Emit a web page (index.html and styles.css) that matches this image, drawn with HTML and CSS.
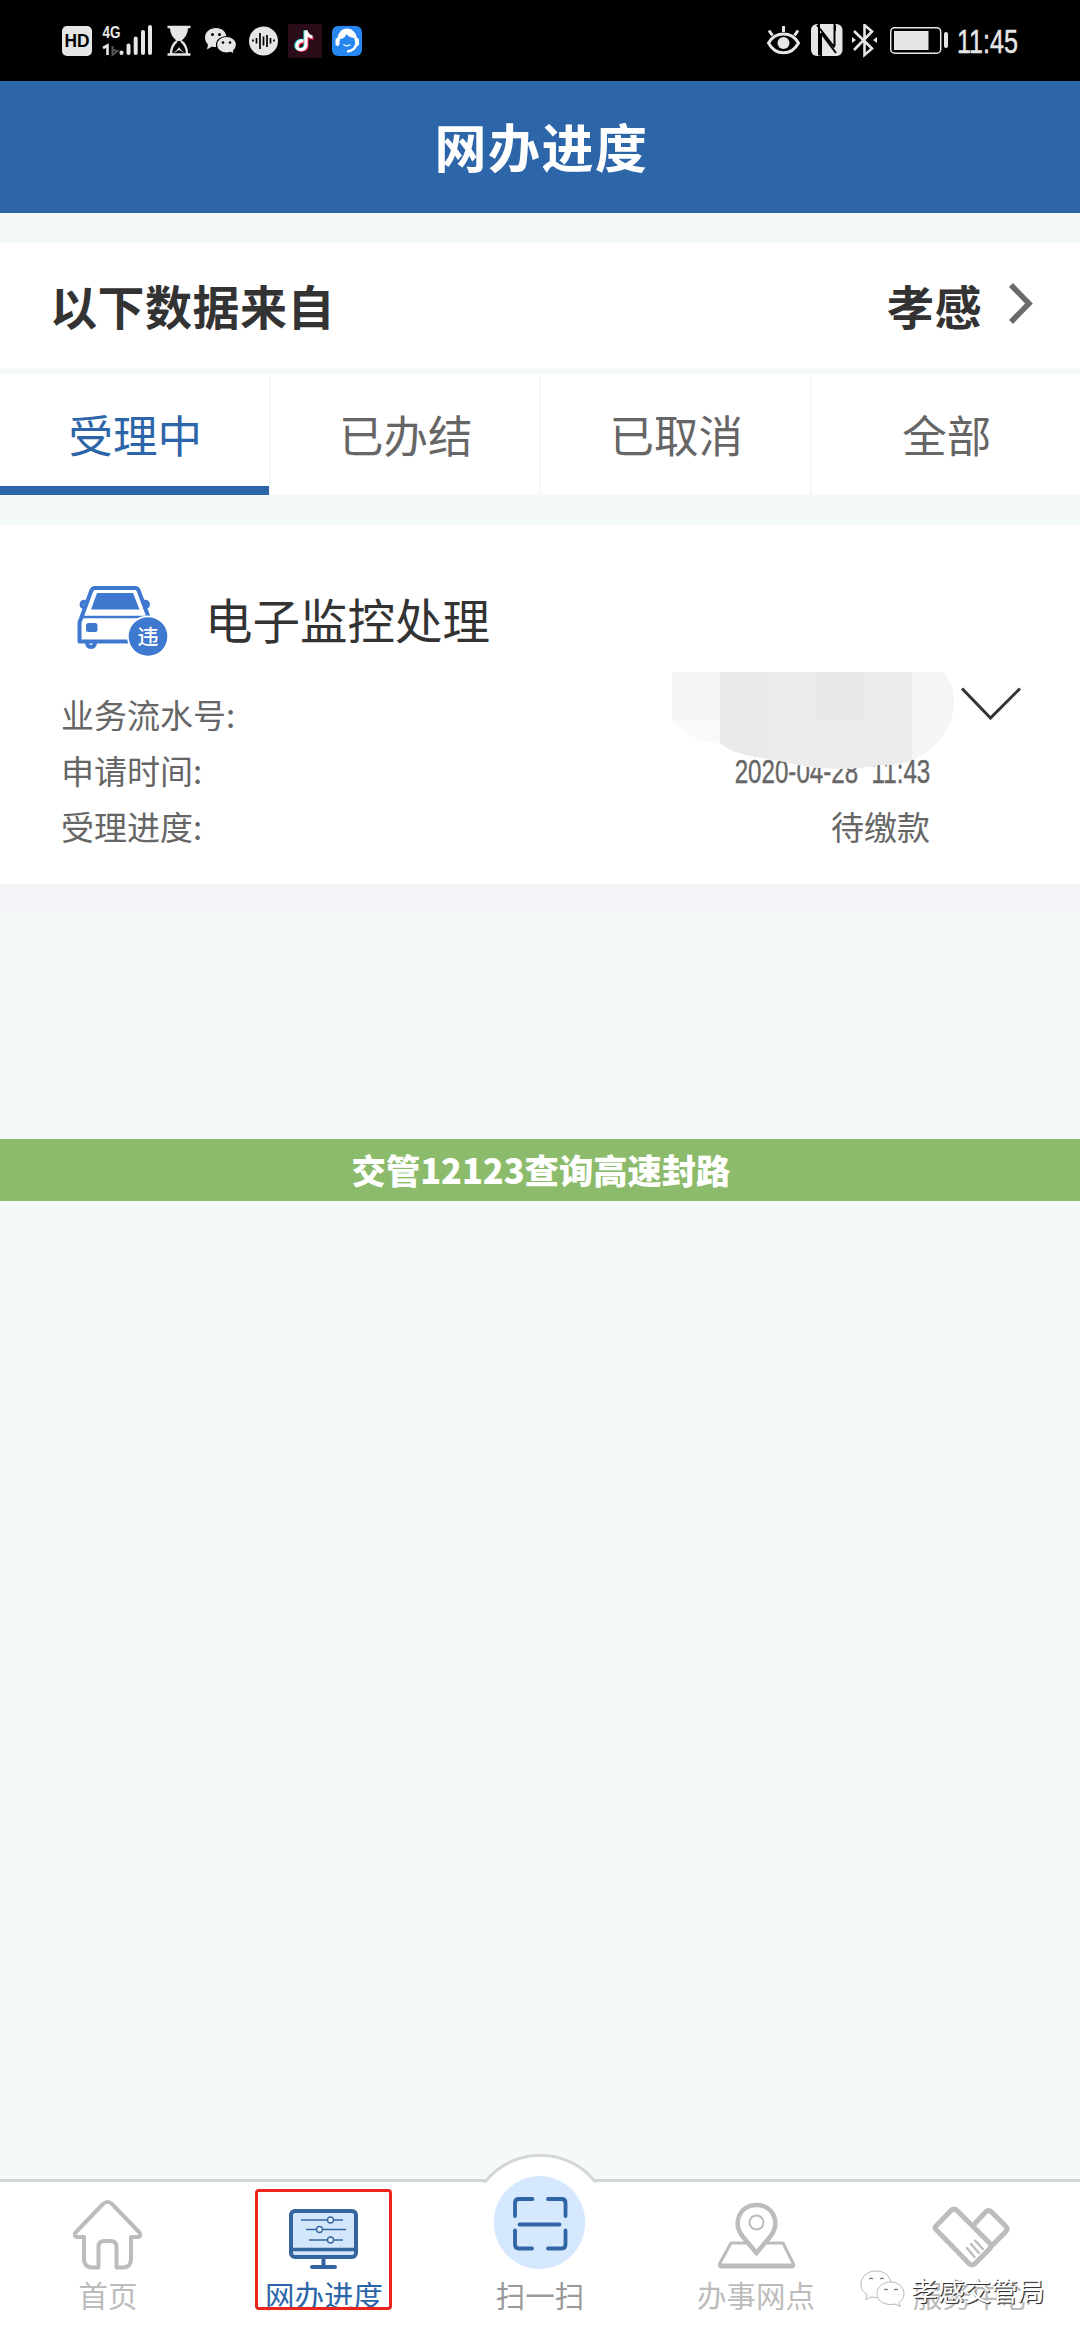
FILE: index.html
```html
<!DOCTYPE html>
<html lang="zh-CN">
<head>
<meta charset="utf-8">
<title>网办进度</title>
<link rel="stylesheet" href="styles.css">
</head>
<body>
<div class="screen">
  <div class="status">
    <div class="status-left">
      <svg width="30" height="34" viewBox="62 24 30 34"><rect x="62" y="26" width="30" height="30" rx="5" fill="#e6e6e6"/><text x="77" y="47.3" class="hd" text-anchor="middle" textLength="25" lengthAdjust="spacingAndGlyphs">HD</text></svg>
      <svg class="ml10" width="51" height="34" viewBox="102 24 51 34"><text x="102.500" y="38" class="net" textLength="18" lengthAdjust="spacingAndGlyphs">4G</text><path d="M103 48l4.500-2.500V55" fill="none" stroke="#e6e6e6" stroke-width="2.600"/><path d="M112.500 46v9l5-4-4-1" fill="none" stroke="#555" stroke-width="2"/><g stroke="#e6e6e6" stroke-width="4" stroke-linecap="round"><path d="M121.500 52.500v.5M128.500 45.500V53M135.700 38.500V53M143 32V53M150 27V53"/></g></svg>
      <svg class="ml14" width="24" height="34" viewBox="167 24 24 34"><path d="M167.500 27h23M167.500 54.500h23" stroke="#e6e6e6" stroke-width="2.400"/><path d="M170 27h18c0 6-2 10-7 14h-4c-5-4-7-8-7-14z" fill="#e6e6e6"/><path d="M177 41c-4 3-6 7-6 13M181 41c4 3 6 7 6 13" fill="none" stroke="#e6e6e6" stroke-width="2.200"/><path d="M172 54c2-2 5-3 7-7 2 4 5 5 7 7l-7-4z" fill="#e6e6e6"/></svg>
      <svg class="ml14" width="32" height="34" viewBox="205 24 32 34"><path d="M216 28c6 0 10.500 4 10.500 9.500S222 47 216 47c-1.500 0-3 0-4-.6L207 49.500l1-5c-2-2-3-4.500-3-7C205 32 210 28 216 28z" fill="#e6e6e6"/><circle cx="212.500" cy="34.500" r="1.500"/><circle cx="219.500" cy="34.500" r="1.500"/><path d="M226.500 36.500c5.500 0 10 3.600 10 8.300 0 2.500-1.500 4.500-3 6l.7 3.200-3.700-1.600c-1.200.4-2.500.6-4 .6-5.500 0-10-3.500-10-8.200s4.500-8.300 10-8.300z" fill="#e6e6e6" stroke="#000" stroke-width="1.200"/><circle cx="223" cy="42.500" r="1.300"/><circle cx="230" cy="42.500" r="1.300"/></svg>
      <svg class="ml12" width="29" height="34" viewBox="249 24 29 34"><circle cx="263.500" cy="41" r="14.500" fill="#e6e6e6"/><path d="M253 39.500v2M256.500 38v5.500M260 33v16M263.500 36.500v9M267 35v12M270.500 38v5.500M274 39.500v2" stroke="#000" stroke-width="1.700"/></svg>
      <svg class="ml10" width="34" height="34" viewBox="288 24 34 34"><rect x="288" y="24" width="34" height="34" fill="#2a0b18"/><g fill="none" stroke-width="3.200"><path d="M302.500 40.500c-5-.5-7 3-6.500 6 .6 4 9 4 9-2V30.500c.8 4 3 5.500 6.500 6" stroke="#31e4dc"/><path d="M304.500 42c-5-.5-7 3-6.500 6 .6 3.500 9 3.500 9-3V32.500c.8 4 3 5.500 6.500 6" stroke="#f02850"/><path d="M303.500 41c-5-.5-7 3-6.500 6 .6 3.500 9 4 9-2.500V30.500c.8 4.500 3 6 6.500 6.500" stroke="#fff"/></g></svg>
      <svg class="ml10" width="30" height="34" viewBox="332 24 30 34"><rect x="332" y="26" width="30" height="30" rx="6" fill="#2587ef"/><path d="M338.500 41c0-15 17-15 17.500 0" fill="none" stroke="#fff" stroke-width="2.500"/><path d="M339.500 39c1-13 15-12 15.500-1-3.500 0-7-1.500-8.500-4-1 3-3.500 5-7 5z" fill="#fff"/><rect x="335.500" y="38" width="4" height="8" rx="2" fill="#fff"/><rect x="355" y="38" width="4" height="8" rx="2" fill="#fff"/><path d="M343.500 44.500c2 1.500 5 1.500 7 0" fill="none" stroke="#fff" stroke-width="1.300"/><path d="M356 45c-1 4-4 6-9 6.500" fill="none" stroke="#fff" stroke-width="2.600"/></svg>
    </div>
    <div class="status-right">
      <svg width="33" height="34" viewBox="767 24 33 34"><path d="M768.500 43c7-12 23-12 30 0-7 13-23 13-30 0z" fill="none" stroke="#e6e6e6" stroke-width="3"/><circle cx="783.500" cy="43" r="6" fill="#e6e6e6"/><path d="M783.500 26v6M769 30.500l3.500 5M798 30.500l-3.500 5" stroke="#e6e6e6" stroke-width="3"/></svg>
      <svg class="ml11" width="32" height="34" viewBox="811 24 32 34"><rect x="811" y="24" width="31.500" height="32" rx="6" fill="#e6e6e6"/><path d="M819 24v31.500M817 25l17.500 22.500M834.500 24v22M821 33l15 20M821 33v24M835 25v6" fill="none" stroke="#000" stroke-width="2"/></svg>
      <svg class="ml9" width="26" height="34" viewBox="852 24 26 34"><path d="M854 31l18 17.500-7.500 6.500V25l7.500 6.500L854 50" fill="none" stroke="#e6e6e6" stroke-width="2.600"/><path d="M852 37l4 3-4 3zM877 37l-4 3 4 3z" fill="#e6e6e6"/></svg>
      <svg class="ml12" width="58" height="34" viewBox="890 24 58 34"><rect x="890.700" y="27.700" width="50" height="25.500" rx="4" fill="none" stroke="#e6e6e6" stroke-width="1.500"/><rect x="894" y="31" width="34.500" height="19" fill="#e6e6e6"/><rect x="944" y="32" width="4" height="16" rx="2" fill="#e6e6e6"/></svg>
      <svg class="ml9" width="64" height="34" viewBox="957 24 64 34"><text x="957" y="53" class="clock" textLength="61" lengthAdjust="spacingAndGlyphs">11:45</text></svg>
    </div>
  </div>

  <header class="title">网办进度</header>

  <main class="content">
    <section class="source">
      <span>以下数据来自</span>
      <span class="city">孝感
        <svg width="26" height="44" viewBox="0 0 26 44"><path d="M3 3l18 18.500L3 40" fill="none" stroke="#6a6a6a" stroke-width="5.500"/></svg>
      </span>
    </section>

    <nav class="tabs">
      <div class="tab tab-on">受理中</div>
      <div class="tab">已办结</div>
      <div class="tab">已取消</div>
      <div class="tab">全部</div>
    </nav>

    <section class="card">
      <div class="card-head">
        <svg width="92" height="72" viewBox="77 585 92 72">
          <g fill="none" stroke="#3e78cf" stroke-width="4" stroke-linejoin="round">
            <path d="M130 641.500H79.500v-19l3-8 8.500-23q1-3.500 4-3.500h40q3 0 4 3.500l8 21.500 2 6"/>
            <path d="M80 617h68" stroke-width="2.500"/>
            <path d="M86.500 602q-5-1-5 2.500 0 3 4 2.500M142.500 602q5.500-1 5.500 2.500 0 3-4.500 2.500"/>
            <path d="M87 642q0 5 4 5t4-5"/>
          </g>
          <path d="M97 593h36l6.500 16.500H91z" fill="#3e78cf"/>
          <rect x="86" y="623" width="11.500" height="9" rx="2.500" fill="#3e78cf"/>
          <circle cx="148" cy="636.500" r="21" fill="#fff"/><circle cx="148" cy="636.500" r="19.300" fill="#3e78cf"/>
          <text x="148" y="644" class="badge" text-anchor="middle">违</text>
        </svg>
        <h2>电子监控处理</h2>
      </div>
      <dl class="rows">
        <div><dt>业务流水号:</dt><dd></dd></div>
        <div><dt>申请时间:</dt><dd><span class="date">2020-04-28&nbsp; 11:43</span></dd></div>
        <div><dt>受理进度:</dt><dd>待缴款</dd></div>
      </dl>
      <svg class="mask" width="283" height="98" viewBox="672 672 283 98">
        <defs><clipPath id="blob"><path d="M672 672h271c7 7 11 16 11 30 0 25-16 46-40 57-12 6-22 6-37 6-22 5-55 5-79 0-15-4-35-7-52-10-10-2-19-7-26-12-18 0-38-9-48-25z"/></clipPath></defs>
        <g clip-path="url(#blob)">
          <rect x="672" y="672" width="283" height="98" fill="#f5f5f5"/>
          <rect x="672" y="720" width="48" height="50" fill="#f9f9f9"/>
          <rect x="720" y="672" width="192" height="98" fill="#ececec"/>
          <rect x="720" y="672" width="48" height="48" fill="#e9e9e9"/>
          <rect x="816" y="672" width="48" height="48" fill="#e8e8e8"/>
          <rect x="720" y="720" width="48" height="50" fill="#eaeaea"/>
        </g>
      </svg>
      <svg class="expand" width="62" height="34" viewBox="959 686 62 34"><path d="M961 688.500l28.500 29.500 29.500-29.500" fill="none" stroke="#333" stroke-width="3"/></svg>
    </section>
    <div class="card-foot"></div>
  </main>

  <div class="banner">交管12123查询高速封路</div>

  <footer class="dock">
    <div class="item">
      <svg width="72" height="72" viewBox="72 2199 72 72"><path d="M84 2237h-7q-4-1-1-5l27-28q4.500-4 9 0l27 28q3 4-1 5h-7v22q0 8-8 8.500h-6.500V2247q0-6-6-6h-6q-6 0-6 6v20.500H92q-8-.5-8-8.500z" fill="#fff" stroke="#bcbcbc" stroke-width="4" stroke-linejoin="round"/></svg>
      <span>首页</span>
    </div>
    <div class="item item-on">
      <svg width="72" height="72" viewBox="288 2199 72 72"><rect x="291" y="2211" width="65" height="46" rx="4" fill="#d3e6fc" stroke="#34659f" stroke-width="4"/><path d="M291 2249.500h65" stroke="#34659f" stroke-width="3.500"/><path d="M323.500 2257v9M312 2267h23" stroke="#34659f" stroke-width="4" stroke-linecap="round"/><path d="M301 2220h42M306 2229.500h40M309 2240h34" stroke="#34659f" stroke-width="1.400"/><g fill="#e5f1fe" stroke="#34659f" stroke-width="1.300"><circle cx="330.500" cy="2220" r="3"/><circle cx="319.500" cy="2229.500" r="3"/><circle cx="330.500" cy="2240" r="3"/></g></svg>
      <span>网办进度</span>
      <i class="focus"></i>
    </div>
    <div class="item item-scan">
      <svg width="116" height="120" viewBox="482 2150 116 120"><path d="M482 2183l4-2a71 71 0 0 1 108.500 0l3.500 2v10H482z" fill="#fff"/><path d="M482 2181h4A70 70 0 0 1 594.500 2181H598" fill="none" stroke="#d4d6d8" stroke-width="3"/><ellipse cx="539.500" cy="2222.500" rx="45.700" ry="46.500" fill="#d6e8fd"/><path d="M515 2216v-13q0-4 4-4h13.500M548 2199h13.500q4 0 4 4v13M515 2230.500v14q0 4 4 4H532M548 2248.500h13.500q4 0 4-4v-14M519.500 2224.500h40" fill="none" stroke="#2f65a5" stroke-width="3.800" stroke-linecap="round"/></svg>
      <span>扫一扫</span>
    </div>
    <div class="item">
      <svg width="80" height="72" viewBox="716 2199 80 72"><path d="M731 2243h52l10 20q2 4-1 4h-70q-4 0-2-4z" fill="#fff" stroke="#bcbcbc" stroke-width="3" stroke-linejoin="round"/><path d="M721 2265.500h72" stroke="#bcbcbc" stroke-width="4"/><path d="M756.500 2253l-13-15.500c-12-14-4-32.500 13-32.500s25 18.500 13 32.500z" fill="#fff" stroke="#bcbcbc" stroke-width="4.500"/><circle cx="756.500" cy="2222.500" r="7" fill="none" stroke="#bcbcbc" stroke-width="2"/></svg>
      <span>办事网点</span>
    </div>
    <div class="item">
      <svg width="80" height="72" viewBox="932 2199 80 72"><g fill="none" stroke="#bcbcbc" stroke-width="5" stroke-linejoin="round" stroke-linecap="round"><path d="M936 2226l15-15.500q3-3 6 0l33 33q2 3 0 5l-15 15q-3 3-6 0l-33-34q-2-1.500 0-3.500zM973.500 2225l12-13q3-3 6 0l14 14q3 3 0 6l-15 15"/><path d="M967 2248l7.500 9M971 2244l8 9M975 2240.500l8 8.500" stroke-width="2.300"/></g></svg>
      <span>服务中心</span>
    </div>
    <div class="sign">
      <svg width="46" height="40" viewBox="859 2270 46 40"><g fill="#fff" stroke="#999" stroke-width=".7"><path d="M875 2272c9 0 15 6 15 13.500s-6 13-15 13l-5-.5-5 2.500 1-5c-4-2-6-6-6-10 0-7.500 6-13.500 15-13.500z"/><path d="M890 2283c7 0 13 5 13 11.500 0 4-2 7-5 9l1 4-5-2.500c-9 2-18-2-18-10.500 0-6.500 6-11.500 14-11.500z"/></g><path d="M868 2280q2-2 4 0M879 2280q2-2 4 0M883 2291q2-2 4 0M893 2291q2-2 4 0" fill="none" stroke="#555"/></svg>
      <b>孝感交管局</b>
    </div>
  </footer>
</div>
</body>
</html>
```
FILE: styles.css
```css
* { box-sizing: border-box; }
body {
  margin: 0;
  font-family: "Noto Sans CJK SC", "Noto Sans", sans-serif;
  color: #333;
  background: #f4f9fa;
}
svg { display: block; flex: none; }
.screen {
  width: 1080px;
  height: 2340px;
  display: flex;
  flex-direction: column;
  overflow: hidden;
  background: #f4f9fa;
}
.status {
  height: 81px;
  flex: none;
  padding: 24px 59px 0 62px;
  background: #000;
  display: flex;
  justify-content: space-between;
}
.status-left, .status-right { display: flex; }
.ml9 { margin-left: 9px; }
.ml10 { margin-left: 10px; }
.ml11 { margin-left: 11px; }
.ml12 { margin-left: 12px; }
.ml14 { margin-left: 14px; }
.hd { font: bold 18px "Liberation Sans", sans-serif; fill: #000; }
.net { font: bold 17px "Liberation Sans", sans-serif; fill: #e6e6e6; }
.clock { font: 33px "Liberation Sans", sans-serif; fill: #e6e6e6; stroke: #e6e6e6; stroke-width: .5px; }
.title {
  height: 132px;
  flex: none;
  background: #2c65a8;
  color: #fff;
  font-size: 52px;
  letter-spacing: 1.500px;
  padding-left: 3px;
  font-weight: 700;
  line-height: 129px;
  text-align: center;
}
.content { flex: none; padding-top: 30px; height: 926px; }
.source {
  height: 125px;
  padding: 0 46px 3px 50px;
  background: #fff;
  display: flex;
  justify-content: space-between;
  align-items: center;
  font-size: 47px;
  letter-spacing: .5px;
  font-weight: 700;
}
.city { display: flex; align-items: center; gap: 26px; }
.tabs {
  margin-top: 6px;
  height: 121px;
  display: grid;
  grid-template-columns: repeat(4, 1fr);
  gap: 2px;
  font-size: 44.5px;
  line-height: 119px;
  text-align: center;
  text-indent: 2px;
  color: #666;
}
.tab { background: #fff; }
.tab-on { color: #2c65a8; border-bottom: 9px solid #2c65a8; height: 121px; }
.card {
  position: relative;
  margin-top: 30px;
  height: 359px;
  padding: 60px 150px 0 61px;
  background: #fff;
}
.card-head { display: flex; padding-left: 16px; height: 72px; align-items: center; }
.card-head h2 { margin: 0 0 4px 36px; font-size: 47.5px; font-weight: 400; line-height: 70px; }
.badge { font: 500 21px "Noto Sans CJK SC", sans-serif; fill: #fff; }
.rows { margin: 29px 0 0; font-size: 33px; line-height: 56px; color: #666; }
.rows div { display: flex; justify-content: space-between; height: 56px; }
.rows dd { margin: 0; }
.date {
  display: block;
  margin-top: 2px;
  font-family: "Liberation Sans", sans-serif;
  white-space: nowrap;
  transform: scaleX(.732);
  transform-origin: right center;
  -webkit-text-stroke: .4px #666;
}
.mask { position: absolute; left: 672px; top: 147px; }
.expand { position: absolute; left: 960px; top: 161px; }
.card-foot { height: 29px; background: #f3f3f8; }
.banner {
  height: 62px;
  flex: none;
  background: #8bbb6b;
  color: #fff;
  font-size: 34.3px;
  font-weight: 900;
  line-height: 60px;
  padding-left: 2px;
  text-align: center;
}
.dock {
  position: relative;
  margin-top: auto;
  height: 161px;
  flex: none;
  display: grid;
  grid-template-columns: repeat(5, 1fr);
  background: #fff;
  border-top: 3px solid #d4d6d8;
}
.item {
  position: relative;
  display: flex;
  flex-direction: column;
  align-items: center;
  padding-top: 17px;
  font-size: 29.5px;
  line-height: 40px;
  color: #bcbcbc;
}
.item span { margin-top: 3px; }
.item-on { color: #2c65a8; }
.item-scan { color: #999; padding-top: 0; }
.item-scan svg { margin-top: -32px; }
.item-scan span { margin-top: 4px; }
.focus {
  position: absolute;
  left: 39px;
  top: 7px;
  width: 137px;
  height: 121px;
  border: 3px solid #e9251d;
  border-radius: 4px;
}
.sign {
  position: absolute;
  left: 860px;
  top: 87px;
  display: flex;
  gap: 5px;
}
.sign b {
  font-size: 26.7px;
  font-weight: 400;
  line-height: 42px;
  color: #fff;
  text-shadow: 1px 1px 0 #333, 1px 1px 1px #777;
}
```
